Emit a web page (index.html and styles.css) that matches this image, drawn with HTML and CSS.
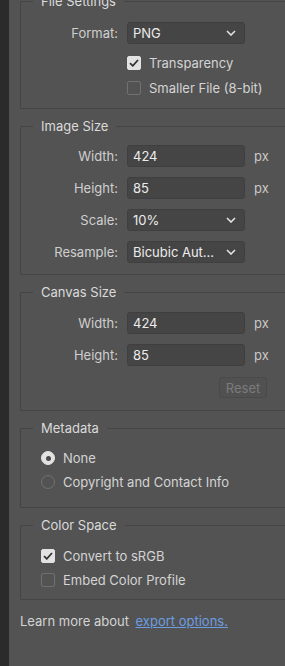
FILE: index.html
```
<!doctype html>
<html lang="en">
  <head>
    <meta charset="utf-8">
    <title>Export Settings</title>
    <link rel="stylesheet" href="styles.css">
  </head>
  <body>
    <div class="app">
      <div class="strip"></div>

      <main class="panel">

        <!-- File settings -->
        <fieldset class="group group-file">
          <legend>File Settings</legend>
          <div class="form">
            <span class="label">Format:</span>
            <div class="field select">PNG
              <svg class="chevron" viewBox="0 0 10 6" width="10" height="6"><path d="M1 1l4 4 4-4"/></svg>
            </div>
            <div class="checks">
              <div class="option"><span class="box checked"><svg viewBox="0 0 10 8" width="10" height="8"><path d="M1 4.2l2.8 2.6L9 1"/></svg></span>Transparency</div>
              <div class="option"><span class="box"></span>Smaller File (8-bit)</div>
            </div>
          </div>
        </fieldset>

        <!-- Image size -->
        <fieldset class="group">
          <legend>Image Size</legend>
          <div class="form">
            <span class="label">Width:</span>
            <div class="field">424</div>
            <span class="unit">px</span>

            <span class="label">Height:</span>
            <div class="field">85</div>
            <span class="unit">px</span>

            <span class="label">Scale:</span>
            <div class="field select">10%
              <svg class="chevron" viewBox="0 0 10 6" width="10" height="6"><path d="M1 1l4 4 4-4"/></svg>
            </div>
            <span></span>

            <span class="label">Resample:</span>
            <div class="field select">Bicubic Aut...
              <svg class="chevron" viewBox="0 0 10 6" width="10" height="6"><path d="M1 1l4 4 4-4"/></svg>
            </div>
            <span></span>
          </div>
        </fieldset>

        <!-- Canvas size -->
        <fieldset class="group group-canvas">
          <legend>Canvas Size</legend>
          <div class="form">
            <span class="label">Width:</span>
            <div class="field">424</div>
            <span class="unit">px</span>

            <span class="label">Height:</span>
            <div class="field">85</div>
            <span class="unit">px</span>
          </div>
          <div class="actions">
            <button class="btn" disabled>Reset</button>
          </div>
        </fieldset>

        <!-- Metadata -->
        <fieldset class="group group-meta">
          <legend>Metadata</legend>
          <div class="list">
            <div class="option"><span class="radio checked"></span>None</div>
            <div class="option"><span class="radio"></span>Copyright and Contact Info</div>
          </div>
        </fieldset>

        <!-- Color space -->
        <fieldset class="group group-color">
          <legend>Color Space</legend>
          <div class="list">
            <div class="option"><span class="box checked"><svg viewBox="0 0 10 8" width="10" height="8"><path d="M1 4.2l2.8 2.6L9 1"/></svg></span>Convert to sRGB</div>
            <div class="option"><span class="box"></span>Embed Color Profile</div>
          </div>
        </fieldset>

        <p class="more">Learn more about <a href="#">export options.</a></p>
      </main>
    </div>
  </body>
</html>
```

FILE: styles.css
```
* {
  box-sizing: border-box;
}

body {
  margin: 0;
  padding: 0;
  overflow: hidden;
  background: #535353;
  color: #d4d4d4;
  font-family: Inter, "Noto Sans", sans-serif;
  font-size: 13px;
  line-height: 16px;
}

.app {
  display: flex;
  height: 666px;
}

/* dark edge of the neighbouring pane */
.strip {
  width: 9px;
  flex: none;
  background: #2b2b2b;
}

.panel {
  flex: none;
  width: 290px;
  padding: 0 0 0 11px;
  display: flex;
  flex-direction: column;
  gap: 9px;
}

/* Group boxes */
.group {
  margin: 0;
  padding: 11px 0 11px 0;
  width: 280px;
  border: 1px solid #454545;
  border-radius: 1px;
}
.group legend {
  margin-left: 12px;
  padding: 0 8px;
  height: 16px;
  line-height: 16px;
  color: #dadada;
}
.group-file {
  margin-top: -7px;
  padding-top: 13px;
  padding-bottom: 10px;
}
.group-canvas {
  padding-bottom: 12px;
}

/* Label / field / unit grid */
.form {
  display: grid;
  grid-template-columns: 97px 118px auto;
  column-gap: 9px;
  row-gap: 10px;
  align-items: center;
}
.group-canvas .form {
  padding-top: 1px;
}
.label {
  text-align: right;
  color: #cfcfcf;
}
.unit {
  color: #c8c8c8;
}
.field {
  height: 22px;
  padding: 0 5px;
  display: flex;
  align-items: center;
  justify-content: space-between;
  background: #454545;
  border: 1px solid #3f3f3f;
  border-radius: 3px;
  color: #ececec;
}
.chevron {
  fill: none;
  stroke: #e2e2e2;
  stroke-width: 1.6;
  margin-right: 3px;
}

.checks {
  grid-column: 2 / span 2;
  display: flex;
  flex-direction: column;
  gap: 5px;
  margin-top: -1px;
}

/* Checkboxes and radios */
.option {
  height: 20px;
  display: flex;
  align-items: center;
  gap: 8px;
  color: #d4d4d4;
  white-space: nowrap;
}
.box,
.radio {
  width: 14px;
  height: 14px;
  flex: none;
  border: 1px solid #717171;
  display: flex;
  align-items: center;
  justify-content: center;
}
.box {
  border-radius: 2px;
}
.box.checked {
  background: #e2e2e2;
  border-color: #e2e2e2;
}
.box svg {
  fill: none;
  stroke: #333;
  stroke-width: 1.8;
}
.radio {
  border-radius: 50%;
}
.radio.checked {
  background: #e2e2e2;
  border-color: #e2e2e2;
}
.radio.checked::after {
  content: "";
  width: 5px;
  height: 5px;
  border-radius: 50%;
  background: #4a4a4a;
}

.list {
  padding-left: 20px;
  display: flex;
  flex-direction: column;
  gap: 4px;
}
.group-meta {
  padding: 12px 0 15px 0;
}
.group-color {
  padding: 13px 0 9px 0;
}

.actions {
  display: flex;
  padding: 11px 32px 0 0;
  justify-content: flex-end;
}
.btn {
  width: 48px;
  height: 21px;
  padding: 0;
  font: inherit;
  color: #7b7b7b;
  background: #515151;
  border: 1px solid #4a4a4a;
  border-radius: 3px;
}

.more {
  margin: 4px 0 0 0;
  color: #d4d4d4;
}
.more a {
  margin-left: 3px;
  color: #6b9de0;
  text-decoration: underline;
}
```
